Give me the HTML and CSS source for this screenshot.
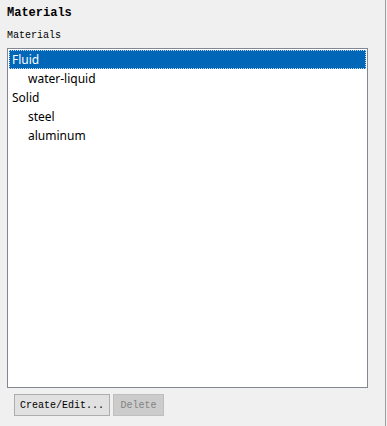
FILE: index.html
```html
<!DOCTYPE html>
<html lang="en">
<head>
    <meta charset="UTF-8">
    <title>Materials</title>
    <link rel="stylesheet" href="styles.css">
</head>
<body>
    <div class="panel">
        <div class="title">Materials</div>
        <div class="label">Materials</div>

        <!-- material tree list -->
        <div class="listbox">
            <div class="row group selected"><span>Fluid</span></div>
            <div class="row child">water-liquid</div>
            <div class="row group">Solid</div>
            <div class="row child">steel</div>
            <div class="row child">aluminum</div>
        </div>

        <div class="buttons">
            <button class="btn">Create/Edit...</button>
            <button class="btn" disabled>Delete</button>
        </div>
    </div>
</body>
</html>
```
FILE: styles.css
```css
html, body {
    margin: 0;
    background: #f0f0f0;
}
.panel {
    width: 386px;
    height: 426px;
    border-right: 1px solid #a0a0a0;
    padding: 0 0 0 7px;
    box-sizing: border-box;
}
.title {
    font-family: "Liberation Mono", monospace;
    font-weight: bold;
    font-size: 12px;
    line-height: 14px;
    padding-top: 6px;
    color: #000;
}
.label {
    font-family: "Liberation Mono", monospace;
    font-size: 10px;
    line-height: 12px;
    margin-top: 10px;
    color: #000;
}
.listbox {
    width: 361px;
    height: 340px;
    box-sizing: border-box;
    margin-top: 6px;
    border: 1px solid #828790;
    background: #fff;
    padding: 1px;
    font-family: "Noto Sans", "Open Sans", sans-serif;
    font-size: 12px;
}
.row {
    height: 19px;
    line-height: 19px;
    color: #000;
    white-space: nowrap;
}
.group {
    padding-left: 3px;
}
.child {
    padding-left: 19px;
}
.selected {
    background: #0066b8;
    color: #fff;
    outline: 1px dotted #c8d8f0;
    outline-offset: -1px;
}
.buttons {
    display: flex;
    gap: 3px;
    margin-top: 6px;
    padding-left: 7px;
}
.btn {
    font-family: "Liberation Mono", monospace;
    font-size: 10px;
    height: 22px;
    padding: 0 5px;
    background: #e1e1e1;
    border: 1px solid #adadad;
    color: #000;
}
.btn:disabled {
    width: 51px;
    background: #cccccc;
    border-color: #bfbfbf;
    color: #838383;
}
```
